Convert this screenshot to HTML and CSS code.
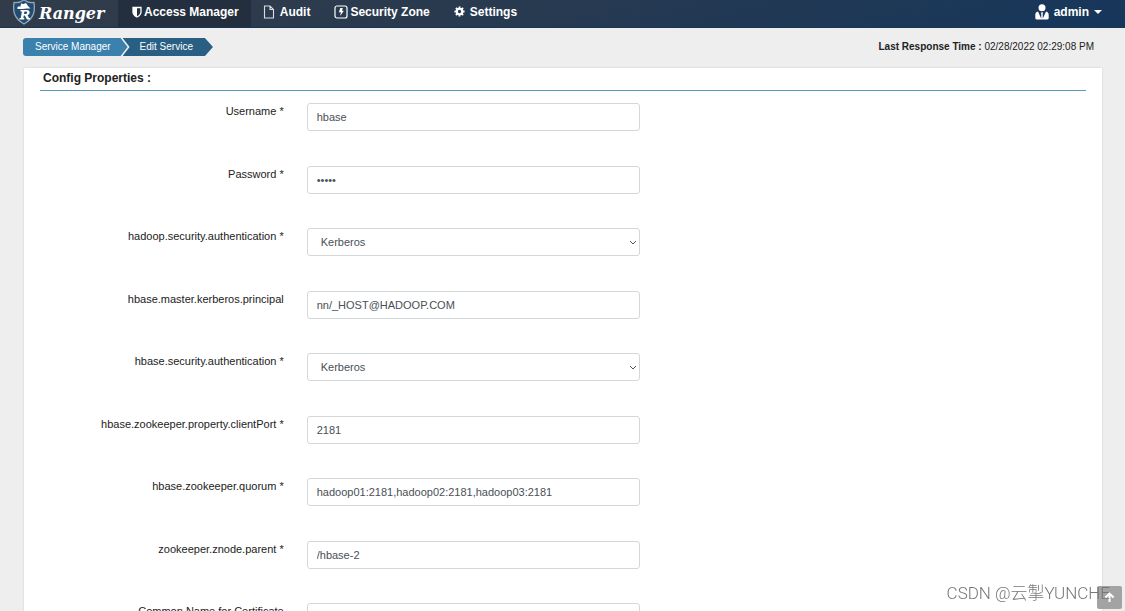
FILE: index.html
```html
<!DOCTYPE html>
<html lang="en">
<head>
<meta charset="utf-8">
<title>Ranger - Edit Service</title>
<link rel="stylesheet" href="styles.css">
</head>
<body>
<header class="navbar">
  <a class="brand" href="#">
    <svg class="brand-shield" viewBox="0 0 24 26" aria-hidden="true">
      <path d="M12 1C9 3 5 4 2 3.500C1 11 1 19 12 25C23 19 23 11 22 3.500C19 4 15 3 12 1Z" fill="#234c70" stroke="#8fa9bd" stroke-width="1.300"/>
      <path d="M5 9.500L6 7.500L8.500 7.500L9 4.500L11.500 5L14 4L16 7L18.500 9.500C14 9 9 11 5 9.500Z" fill="#fff"/>
      <path d="M8.500 11H15C18.500 11 18.500 15.500 15.500 16L17 19H18V20.500H15L12.800 16.500H11.800L11.300 19H12.300V20.500H7.500V19H8.800L9.900 12.500H8.500ZM12.400 12.600L12 15H13.800C15.500 15 15.700 12.600 14.300 12.600Z" fill="#fff" fill-rule="evenodd"/>
    </svg>
    <span>Ranger</span>
  </a>
  <nav class="menu">
    <a class="menu-item active" href="#">
      <svg class="icon-shield" viewBox="0 0 10 12" aria-hidden="true"><path d="M1 1.500H9V6C9 8.500 7 10 5 11C3 10 1 8.500 1 6Z" fill="none" stroke="#fff" stroke-width="1.300"/><path d="M1 1.500H5V11C3 10 1 8.500 1 6Z" fill="#fff"/></svg>
      Access Manager</a>
    <a class="menu-item audit" href="#">
      <svg class="icon-file" viewBox="0 0 12 14" aria-hidden="true"><path d="M1.500 1H7L10.500 4.500V13H1.500ZM7 1V4.500H10.500" fill="none" stroke="#d8dee3" stroke-width="1.100"/></svg>
      Audit</a>
    <a class="menu-item zone" href="#">
      <svg class="icon-bolt" viewBox="0 0 14 14" aria-hidden="true"><rect x="1" y="1" width="12" height="12" rx="2" fill="none" stroke="#fff" stroke-width="1.200"/><path d="M6.300 3H8.800L8 5.800H9.800L6.200 11L6.900 7.300H4.900Z" fill="#fff"/></svg>
      Security Zone</a>
    <a class="menu-item settings" href="#">
      <svg class="icon-gear" viewBox="0 0 12 12" aria-hidden="true"><circle cx="6" cy="6" r="3" fill="none" stroke="#fff" stroke-width="2.400"/><path d="M6 .5V3M6 9V11.500M.5 6H3M9 6H11.500M2.100 2.100L3.800 3.800M8.200 8.200L9.900 9.900M9.900 2.100L8.200 3.800M3.800 8.200L2.100 9.900" stroke="#fff" stroke-width="2"/></svg>
      Settings</a>
  </nav>
  <button class="user" type="button">
    <svg class="icon-user" viewBox="0 0 14 16" aria-hidden="true"><circle cx="7" cy="3.800" r="3.500" fill="#fff"/><path d="M3 7.500C1 8 .3 9 .3 11V14Q.3 15.500 2 15.500H12Q13.700 15.500 13.700 14V11C13.700 9 13 8 11 7.500L7.800 14.500L7.700 10L8.300 8.500H5.700L6.300 10L6.200 14.500Z" fill="#fff"/></svg>
    admin
    <span class="caret"></span>
  </button>
</header>

<div class="subbar">
  <nav class="breadcrumb" aria-label="Breadcrumb">
    <a class="crumb first" href="#">Service Manager</a>
    <a class="crumb last" href="#">Edit Service</a>
  </nav>
  <div class="response"><b>Last Response Time :</b> 02/28/2022 02:29:08 PM</div>
</div>

<main class="panel">
  <h1 class="title">Config Properties :</h1>
  <form class="form">
    <div class="row"><label for="user">Username *</label><input class="control" id="user" type="text" value="hbase"></div>
    <div class="row"><label for="pass">Password *</label><input class="control" id="pass" type="password" value="hbase"></div>
    <div class="row"><label for="hadoop-auth">hadoop.security.authentication *</label><select class="control" id="hadoop-auth"><option>Kerberos</option><option>Simple</option></select></div>
    <div class="row"><label for="principal">hbase.master.kerberos.principal</label><input class="control" id="principal" type="text" value="nn/_HOST@HADOOP.COM"></div>
    <div class="row"><label for="hbase-auth">hbase.security.authentication *</label><select class="control" id="hbase-auth"><option>Kerberos</option><option>Simple</option></select></div>
    <div class="row"><label for="port">hbase.zookeeper.property.clientPort *</label><input class="control" id="port" type="text" value="2181"></div>
    <div class="row"><label for="quorum">hbase.zookeeper.quorum *</label><input class="control" id="quorum" type="text" value="hadoop01:2181,hadoop02:2181,hadoop03:2181"></div>
    <div class="row"><label for="znode">zookeeper.znode.parent *</label><input class="control" id="znode" type="text" value="/hbase-2"></div>
    <div class="row"><label for="cert">Common Name for Certificate</label><input class="control" id="cert" type="text"></div>
  </form>
</main>

<button class="to-top" type="button" aria-label="Back to top">
  <svg class="icon-up" viewBox="0 0 12 12" aria-hidden="true"><path d="M6 11V2M1.500 6L6 1.700L10.500 6" fill="none" stroke="#fff" stroke-width="2.200"/></svg>
</button>
<div class="watermark">CSDN @云掣YUNCHE</div>
</body>
</html>
```

FILE: styles.css
```css
* { box-sizing: border-box; }

body {
  margin: 0;
  height: 100vh;
  overflow: hidden;
  display: flex;
  flex-direction: column;
  background: #eee;
  color: #222;
  font-family: "Liberation Sans", Arial, "Noto Sans CJK SC", sans-serif;
  font-size: 11px;
  line-height: 16px;
}

a { color: inherit; text-decoration: none; }
svg { display: block; flex: none; }

.navbar {
  flex: none;
  display: flex;
  height: 28px;
  background: linear-gradient(165deg, #323c49, #283a50 45%, #15365c);
  border-bottom: 1px solid #1c3450;
  color: #fff;
  font-size: 12px;
  font-weight: bold;
}

.brand {
  display: flex;
  align-items: center;
  gap: 3px;
  width: 118px;
  padding-left: 12px;
  font: italic bold 16px/24px "DejaVu Serif", serif;
}
.brand-shield { width: 24px; height: 26px; margin-bottom: 4px; }

.menu { display: flex; }
.menu-item {
  display: flex;
  align-items: center;
  gap: 2px;
  padding: 0 12px 4px 14px;
}
.active { background: #232f3e; }
.audit { gap: 5px; padding-left: 12px; }
.zone { padding-left: 12px; }
.settings { gap: 5px; padding-left: 12px; }
.icon-shield { width: 10px; height: 12px; }
.icon-file { width: 12px; height: 14px; }
.icon-bolt { width: 14px; height: 14px; }
.icon-gear { width: 11px; height: 11px; }

.user {
  display: flex;
  align-items: center;
  gap: 5px;
  margin-left: auto;
  padding: 0 23px 4px 8px;
  border: 0;
  background: none;
  color: inherit;
  font: inherit;
}
.icon-user { width: 14px; height: 16px; }
.caret {
  border: 4px solid transparent;
  border-top-color: #fff;
  border-bottom: 0;
}

.subbar {
  flex: none;
  display: flex;
  justify-content: space-between;
  align-items: center;
  height: 40px;
  padding: 0 31px 2px 23px;
  font-size: 10px;
}
.breadcrumb { display: flex; color: #fff; }
.crumb { height: 18px; line-height: 18px; }
.first {
  padding: 0 17px 0 12px;
  border-radius: 3px 0 0 3px;
  background: #3a81ae;
  clip-path: polygon(0 0, calc(100% - 7px) 0, 100% 50%, calc(100% - 7px) 100%, 0 100%);
}
.last {
  margin-left: -5px;
  padding: 0 20px 0 17px;
  background: #285f82;
  clip-path: polygon(0 0, calc(100% - 8px) 0, 100% 50%, calc(100% - 8px) 100%, 0 100%, 7px 50%);
}

.panel {
  flex: 1;
  min-height: 0;
  overflow: hidden;
  margin: 0 23px 0 24px;
  padding: 0 16px;
  background: #fff;
  box-shadow: 0 0 2px #ccc;
}
.title {
  margin: 0 0 12px;
  padding: 2px 3px 3px;
  border-bottom: 1px solid #5a9bc0;
  font-size: 12px;
  line-height: 17px;
}

.row {
  display: grid;
  grid-template-columns: 23.3% 31.9%;
  gap: 23px;
  margin-bottom: 35px;
}
.row:nth-child(even) { margin-bottom: 34px; }
.row label { text-align: right; }
.control {
  width: 100%;
  height: 28px;
  padding: 0 9px;
  border: 1px solid #d3d8db;
  border-radius: 3px;
  background: #fff;
  color: #495057;
  font: inherit;
}
select.control {
  appearance: none;
  padding: 0 20px 0 13px;
  background: #fff url("data:image/svg+xml,%3Csvg xmlns='http://www.w3.org/2000/svg' viewBox='0 0 8 5'%3E%3Cpath d='M1 1L4 4L7 1' fill='none' stroke='%23555'/%3E%3C/svg%3E") no-repeat right 2px center / 8px 5px;
}

.to-top {
  position: fixed;
  right: 3px;
  bottom: 2px;
  display: grid;
  place-items: center;
  width: 25px;
  height: 23px;
  padding: 0;
  border: 0;
  border-radius: 2px;
  background: #a3a3a3;
}
.icon-up { width: 11px; height: 11px; }

.watermark {
  position: fixed;
  right: 15px;
  bottom: 6px;
  color: #777;
  font: 300 17px/24px Roboto, "Noto Sans CJK SC", sans-serif;
  pointer-events: none;
}
```
